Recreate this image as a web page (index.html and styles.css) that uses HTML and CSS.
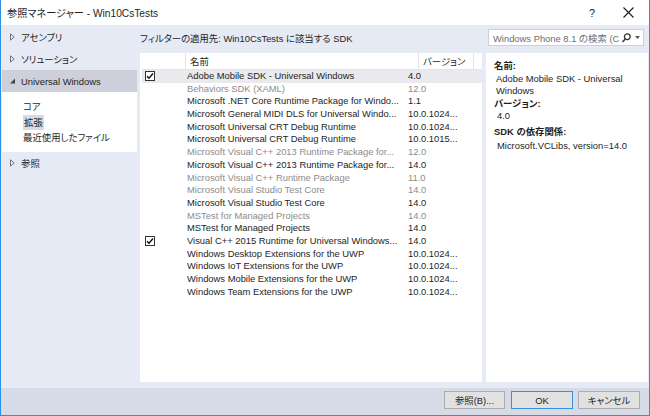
FILE: index.html
```html
<!DOCTYPE html>
<html lang="ja">
<head>
<meta charset="utf-8">
<title>参照マネージャー</title>
<link rel="stylesheet" href="styles.css">
</head>
<body>
<div class="window">
  <div class="titlebar">
    <span class="title">参照マネージャー - Win10CsTests</span>
    <span class="help">?</span>
    <span class="close"><svg width="11" height="11" viewBox="0 0 11 11"><path d="M0.5 0.5L10.5 10.5M10.5 0.5L0.5 10.5" stroke="#1a1a1a" stroke-width="1.1" fill="none"/></svg></span>
  </div>
  <div class="main">
    <nav class="tree">
      <div class="node"><svg class="tri" width="5" height="8" viewBox="0 0 5 8"><path d="M0.5 0.8L4.2 4L0.5 7.2Z" fill="none" stroke="#777" stroke-width="1"/></svg><span>アセンブリ</span></div>
      <div class="node"><svg class="tri" width="5" height="8" viewBox="0 0 5 8"><path d="M0.5 0.8L4.2 4L0.5 7.2Z" fill="none" stroke="#777" stroke-width="1"/></svg><span>ソリューション</span></div>
      <div class="node selected"><svg class="tri" width="5" height="8" viewBox="0 0 5 8"><path d="M0 6.5L5 6.5L5 1.5Z" fill="#444"/></svg><span>Universal Windows</span></div>
      <ul class="sub">
        <li>コア</li>
        <li><span class="hl">拡張</span></li>
        <li>最近使用したファイル</li>
      </ul>
      <div class="node"><svg class="tri" width="5" height="8" viewBox="0 0 5 8"><path d="M0.5 0.8L4.2 4L0.5 7.2Z" fill="none" stroke="#777" stroke-width="1"/></svg><span>参照</span></div>
    </nav>
    <section class="content">
      <div class="filterbar">
        <span class="filter-label">フィルターの適用先: Win10CsTests に該当する SDK</span>
        <div class="search">
          <span class="search-text">Windows Phone 8.1 の検索 (Ctrl+E)</span>
          <svg class="search-icon" width="9" height="10" viewBox="0 0 9 10"><circle cx="5.3" cy="3.7" r="2.9" fill="none" stroke="#333" stroke-width="1.3"/><path d="M3.2 5.9L0.6 8.9" stroke="#333" stroke-width="1.5"/></svg>
          <svg class="drop" width="5" height="3" viewBox="0 0 5 3"><path d="M0 0H5L2.5 3Z" fill="#555"/></svg>
        </div>
      </div>
      <div class="panes">
        <div class="list">
          <div class="header">
            <div class="hcell hcheck"></div>
            <div class="hcell hname">名前</div>
            <div class="hcell hver">バージョン</div>
            <div class="hcell hrest"></div>
          </div>
          <div class="rows">
            <div class="row current"><span class="ccell"><span class="check"><svg width="8" height="8" viewBox="0 0 8 8"><path d="M1 4.2L3 6.3L7 1.5" fill="none" stroke="#111" stroke-width="1.4"/></svg></span></span><span class="name">Adobe Mobile SDK - Universal Windows</span><span class="ver">4.0</span></div>
            <div class="row dim"><span class="ccell"></span><span class="name">Behaviors SDK (XAML)</span><span class="ver">12.0</span></div>
            <div class="row"><span class="ccell"></span><span class="name">Microsoft .NET Core Runtime Package for Windo...</span><span class="ver">1.1</span></div>
            <div class="row"><span class="ccell"></span><span class="name">Microsoft General MIDI DLS for Universal Windo...</span><span class="ver">10.0.1024...</span></div>
            <div class="row"><span class="ccell"></span><span class="name">Microsoft Universal CRT Debug Runtime</span><span class="ver">10.0.1024...</span></div>
            <div class="row"><span class="ccell"></span><span class="name">Microsoft Universal CRT Debug Runtime</span><span class="ver">10.0.1015...</span></div>
            <div class="row dim"><span class="ccell"></span><span class="name">Microsoft Visual C++ 2013 Runtime Package for...</span><span class="ver">12.0</span></div>
            <div class="row"><span class="ccell"></span><span class="name">Microsoft Visual C++ 2013 Runtime Package for...</span><span class="ver">14.0</span></div>
            <div class="row dim"><span class="ccell"></span><span class="name">Microsoft Visual C++ Runtime Package</span><span class="ver">11.0</span></div>
            <div class="row dim"><span class="ccell"></span><span class="name">Microsoft Visual Studio Test Core</span><span class="ver">14.0</span></div>
            <div class="row"><span class="ccell"></span><span class="name">Microsoft Visual Studio Test Core</span><span class="ver">14.0</span></div>
            <div class="row dim"><span class="ccell"></span><span class="name">MSTest for Managed Projects</span><span class="ver">14.0</span></div>
            <div class="row"><span class="ccell"></span><span class="name">MSTest for Managed Projects</span><span class="ver">14.0</span></div>
            <div class="row"><span class="ccell"><span class="check"><svg width="8" height="8" viewBox="0 0 8 8"><path d="M1 4.2L3 6.3L7 1.5" fill="none" stroke="#111" stroke-width="1.4"/></svg></span></span><span class="name">Visual C++ 2015 Runtime for Universal Windows...</span><span class="ver">14.0</span></div>
            <div class="row"><span class="ccell"></span><span class="name">Windows Desktop Extensions for the UWP</span><span class="ver">10.0.1024...</span></div>
            <div class="row"><span class="ccell"></span><span class="name">Windows IoT Extensions for the UWP</span><span class="ver">10.0.1024...</span></div>
            <div class="row"><span class="ccell"></span><span class="name">Windows Mobile Extensions for the UWP</span><span class="ver">10.0.1024...</span></div>
            <div class="row"><span class="ccell"></span><span class="name">Windows Team Extensions for the UWP</span><span class="ver">10.0.1024...</span></div>
          </div>
        </div>
        <aside class="details">
          <div class="label">名前:</div>
          <div class="value">Adobe Mobile SDK - Universal Windows</div>
          <div class="label">バージョン:</div>
          <div class="value v2">4.0</div>
          <div class="label gap">SDK の依存関係:</div>
          <div class="value v2 dep">Microsoft.VCLibs, version=14.0</div>
        </aside>
      </div>
    </section>
  </div>
  <div class="footer">
    <button class="btn">参照(B)...</button>
    <button class="btn default">OK</button>
    <button class="btn">キャンセル</button>
  </div>
</div>
</body>
</html>
```
FILE: styles.css
```css
* { box-sizing: border-box; }
html, body { margin: 0; padding: 0; background: #ffffff; }
body {
  font-family: "Liberation Sans", "Noto Sans CJK JP", sans-serif;
  font-size: 9.4px;
  color: #1e1e1e;
  font-feature-settings: "palt" 1;
}
.window {
  width: 650px;
  height: 416px;
  border: 1px solid #2f8fe3;
  border-top: none;
  display: flex;
  flex-direction: column;
  background: #e6eaf5;
}
.titlebar {
  height: 25px;
  background: #ffffff;
  display: flex;
  align-items: center;
  padding-left: 6px;
  font-size: 10.2px;
}
.title { flex: 1; }
.help { width: 10px; margin-right: 26px; font-size: 11px; text-align: center; }
.close { width: 11px; height: 11px; margin-right: 15px; display: flex; }

.main {
  height: 360px;
  display: flex;
}
.tree {
  width: 139px;
  padding-left: 1px;
  padding-right: 3px;
}
.node {
  height: 22px;
  display: flex;
  align-items: center;
  padding-left: 8px;
}
.node:first-child { height: 23px; }
.node .tri { margin-right: 6px; flex: none; }
.node.selected { background: #cdd0db; }
.sub {
  list-style: none;
  margin: 0;
  background: #ffffff;
  padding: 7px 0 7px 21px;
  height: 60px;
}
.sub li { height: 15.5px; line-height: 15.5px; }
.hl { background: #d9dbe3; padding: 2px 1px; }

.content {
  width: 508px;
  display: flex;
  flex-direction: column;
}
.filterbar {
  height: 28px;
  display: flex;
  align-items: center;
  justify-content: space-between;
  padding-right: 4px;
  padding-bottom: 3px;
}
.search {
  width: 156px;
  height: 17px;
  background: #ffffff;
  border: 1px solid #ccd0da;
  display: flex;
  align-items: center;
  padding-left: 4px;
  padding-right: 4px;
  overflow: hidden;
}
.search-text {
  color: #6d6d6d;
  white-space: nowrap;
  overflow: hidden;
  width: 126px;
  flex: none;
}
.search-icon { margin-left: 3px; flex: none; }
.drop { margin-left: 4px; flex: none; }

.panes {
  height: 329px;
  display: flex;
  gap: 3px;
}
.list {
  width: 342px;
  background: #ffffff;
  padding-left: 2px;
}
.header {
  height: 17px;
  display: flex;
  border-bottom: 1px solid #e4e4e8;
}
.hcell {
  border-right: 1px solid #e4e4e8;
  display: flex;
  align-items: center;
  padding-left: 4px;
}
.hcheck { width: 44px; }
.hname { width: 233px; }
.hver { width: 55px; }
.hrest { flex: 1; border-right: none; }
.row {
  height: 12.7px;
  line-height: 12.7px;
  display: flex;
  white-space: nowrap;
}
.row.current { background: #e9e9ee; }
.row.dim { color: #8c8c8c; }
.ccell { width: 45px; display: flex; align-items: center; padding-left: 3px; }
.check {
  width: 10px;
  height: 10px;
  border: 1px solid #333333;
  background: #ffffff;
  display: flex;
  align-items: center;
  justify-content: center;
}
.name { width: 221px; overflow: hidden; }
.ver { flex: 1; }

.details {
  flex: 1;
  background: #ffffff;
  border-left: 1px solid #eceef3;
  padding: 7px 4px 0 8px;
  line-height: 12.5px;
}
.label { font-weight: bold; }
.value { padding-left: 2px; }
.v2 { padding-left: 3px; }
.gap { margin-top: 3px; }
.dep { margin-top: 2px; }

.footer {
  height: 30px;
  background: #d6dbe8;
  border-top: 3px solid #e6eaf5;
  display: flex;
  justify-content: flex-end;
  align-items: flex-start;
  padding-top: 3px;
  padding-right: 9px;
  gap: 5px;
}
.btn {
  width: 62px;
  height: 18px;
  background: #e1e1e1;
  border: 1px solid #adadad;
  font: inherit;
  color: #1e1e1e;
  padding: 0;
}
.btn:first-child { width: 61px; margin-right: 1px; }
.btn.default { border-color: #3a8ee0; }
```
